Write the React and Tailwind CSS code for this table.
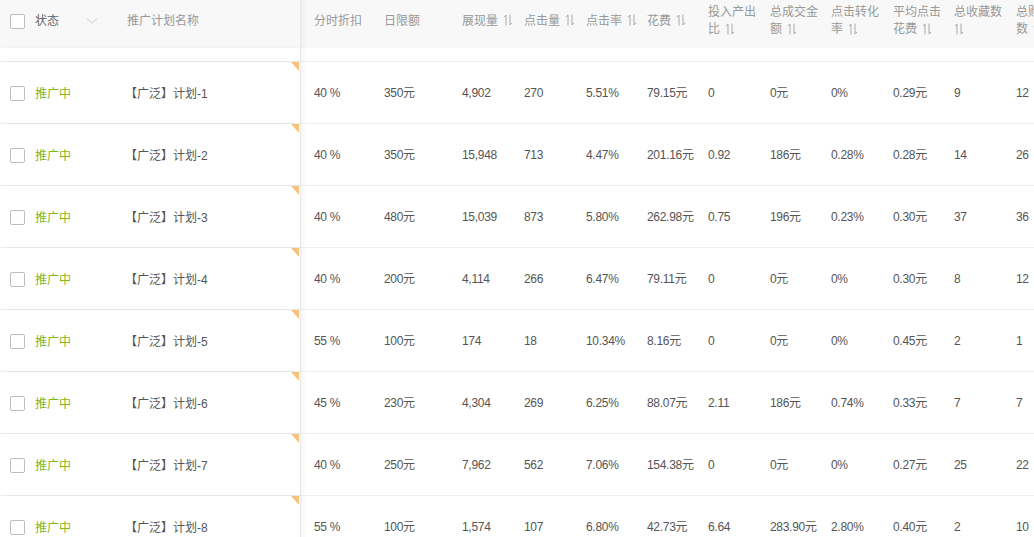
import React from 'react'

const font = { fontFamily: '"Liberation Sans", "Noto Sans CJK SC", sans-serif' }

const colWidths = ['w-[70px]', 'w-[78px]', 'w-[62px]', 'w-[62px]', 'w-[61px]', 'w-[61px]', 'w-[62px]', 'w-[61px]', 'w-[62px]', 'w-[61px]', 'w-[62px]', 'w-[62px]']

const headers = [
    { lines: ['分时折扣'] },
    { lines: ['日限额'] },
    { lines: ['展现量'], sort: true },
    { lines: ['点击量'], sort: true },
    { lines: ['点击率'], sort: true },
    { lines: ['花费'], sort: true },
    { lines: ['投入产出', '比'], sort: true },
    { lines: ['总成交金', '额'], sort: true },
    { lines: ['点击转化', '率'], sort: true },
    { lines: ['平均点击', '花费'], sort: true },
    { lines: ['总收藏数', ''], sort: true },
    { lines: ['总购物车', '数'], sort: true },
]

const rows = [
    ['40 %', '350元', '4,902', '270', '5.51%', '79.15元', '0', '0元', '0%', '0.29元', '9', '12'],
    ['40 %', '350元', '15,948', '713', '4.47%', '201.16元', '0.92', '186元', '0.28%', '0.28元', '14', '26'],
    ['40 %', '480元', '15,039', '873', '5.80%', '262.98元', '0.75', '196元', '0.23%', '0.30元', '37', '36'],
    ['40 %', '200元', '4,114', '266', '6.47%', '79.11元', '0', '0元', '0%', '0.30元', '8', '12'],
    ['55 %', '100元', '174', '18', '10.34%', '8.16元', '0', '0元', '0%', '0.45元', '2', '1'],
    ['45 %', '230元', '4,304', '269', '6.25%', '88.07元', '2.11', '186元', '0.74%', '0.33元', '7', '7'],
    ['40 %', '250元', '7,962', '562', '7.06%', '154.38元', '0', '0元', '0%', '0.27元', '25', '22'],
    ['55 %', '100元', '1,574', '107', '6.80%', '42.73元', '6.64', '283.90元', '2.80%', '0.40元', '2', '10'],
]

const SortIcon = () => (
    <svg width="10" height="12" viewBox="0 0 10 12" className="inline-block ml-[5px] -mt-[2px] align-middle" fill="none" stroke="#aaa" strokeWidth="1">
        <path d="M3 11.5V1L0.8 3.2" />
        <path d="M7 0.5V11L9.2 8.8" />
    </svg>
)

const Checkbox = () => (
    <span className="block w-[15px] h-[15px] rounded-[2px] border border-[#bdbdbd] bg-white shrink-0" />
)

const LeftCell = ({ children, className = '' }) => (
    <div className={`relative w-[301px] shrink-0 border-r border-[#e8e8e8] shadow-[3px_0_4px_rgba(0,0,0,0.04)] z-10 flex items-center ${className}`}>
        {children}
    </div>
)

const App = () => {
    return (
        <div className="w-[1034px] h-[537px] overflow-hidden bg-white text-[12px]" style={font}>
            {/* header */}
            <div className="flex h-[48px] bg-[#f8f8f8] w-max">
                <LeftCell className="bg-[#f8f8f8] pb-[6px]">
                    <div className="w-[124px] shrink-0 flex items-center pl-[10px]">
                        <Checkbox />
                        <span className="ml-[10px] text-[#666]">状态</span>
                        <svg width="12" height="8" viewBox="0 0 12 8" className="ml-[27px]" fill="none" stroke="#ccc" strokeWidth="1">
                            <path d="M1 1.5L6 6L11 1.5" />
                        </svg>
                    </div>
                    <span className="pl-[3px] text-[#999]">推广计划名称</span>
                </LeftCell>
                {headers.map((h, i) => (
                    <div key={i} className={`${colWidths[i]} shrink-0 pl-[13px] pb-[6px] flex items-center text-[#999] leading-[17px] whitespace-nowrap`}>
                        <div>
                            {h.lines.length === 1 ? (
                                <span>{h.lines[0]}{h.sort && <SortIcon />}</span>
                            ) : (
                                <>
                                    <div>{h.lines[0]}</div>
                                    <div>{h.lines[1]}{h.sort && <span className={h.lines[1] ? '' : '-ml-[5px]'}><SortIcon /></span>}</div>
                                </>
                            )}
                        </div>
                    </div>
                ))}
            </div>

            {/* spacer */}
            <div className="flex h-[13px] w-max">
                <LeftCell className="bg-white" />
            </div>

            {/* rows */}
            {rows.map((r, ri) => (
                <div key={ri} className="flex h-[62px] border-t border-[#efefef] w-max">
                    <LeftCell className="bg-white pt-[2px]">
                        <span className="absolute top-0 right-[1px] w-0 h-0 border-t-[9px] border-t-[#f7c27c] border-l-[8px] border-l-transparent" />
                        <div className="w-[124px] shrink-0 flex items-center pl-[10px]">
                            <Checkbox />
                            <span className="ml-[10px] text-[#86b51a]">推广中</span>
                        </div>
                        <span className="text-[#555] pl-[1px]">【广泛】计划-{ri + 1}</span>
                    </LeftCell>
                    {r.map((v, ci) => (
                        <div key={ci} className={`${colWidths[ci]} shrink-0 pl-[13px] flex items-center text-[#555] whitespace-nowrap tracking-[-0.3px]`}>
                            {v}
                        </div>
                    ))}
                </div>
            ))}
        </div>
    )
}

export default App
